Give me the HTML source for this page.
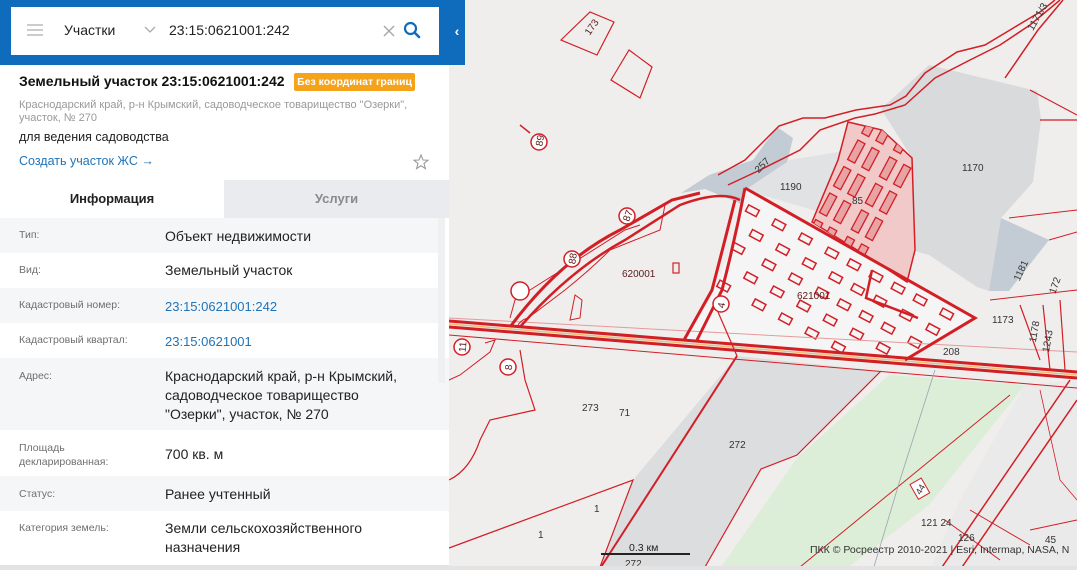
<!DOCTYPE html>
<html><head><meta charset="utf-8"><style>
*{margin:0;padding:0;box-sizing:border-box}
body{width:1077px;height:570px;overflow:hidden;font-family:"Liberation Sans","DejaVu Sans",sans-serif;background:#efeeed;position:relative}
#map{position:absolute;left:0;top:0}
#panel{position:absolute;left:0;top:0;width:449px;height:570px;background:#fff}
#hdr{position:absolute;left:0;top:0;width:449px;height:65px;background:#0f6cbd}
#box{position:absolute;left:11px;top:7px;width:428px;height:48px;background:#fff}
#tab{position:absolute;left:449px;top:0;width:16px;height:65px;background:#0f6cbd;color:#fff;font-size:14px;font-weight:bold;text-align:center;line-height:62px}
.row{position:absolute;left:0;width:438px}
.g{background:#f5f6f8}
.lab{position:absolute;left:19px;font-size:10.5px;color:#6f6f6f;line-height:14px}
.val{position:absolute;left:165px;font-size:14px;color:#222;line-height:19px}
.lnk{color:#1f73b7}
</style></head><body>
<svg id="map" width="1077" height="570" viewBox="0 0 1077 570">
<defs>
<clipPath id="set"><polygon points="745,188 975,318 905,360 684,340 710,300 735,240"/></clipPath>
<clipPath id="pk"><polygon points="848,122 882,130 912,158 915,250 907,282 870,258 812,222 838,160"/></clipPath>
</defs>
<rect width="1077" height="570" fill="#efeeed"/>
<polygon points="881,109 929,65 1037,91 1041,120 1033,182 1001,218 989,291 977,287 929,255 912,250 912,158" fill="#d9dadb"/>
<polygon points="1001,218 1049,240 1009,291 989,291" fill="#c3ccd4"/>
<polygon points="681,193 709,175 753,160 777,127 793,138 785,171 753,185 741,204 705,189" fill="#c3ccd4"/>
<polygon points="745,190 790,160 850,150 870,180 830,215" fill="#e1e2e3"/>
<polygon points="737,356 881,371 797,455 761,469 705,567 601,567 633,480" fill="#dcdddf"/>
<polygon points="889,375 1025,385 929,505 849,567 721,567 797,458" fill="#dceed7"/>
<polygon points="1025,385 1077,380 1077,570 930,570 960,500" fill="#eaeaea"/>
<polygon points="745,188 975,318 905,360 684,340 710,300 735,240" fill="#f6f5f5"/>
<g clip-path="url(#set)" fill="none" stroke="#d21f26" stroke-width="1.5">
<g transform="rotate(28 850 270)">
<rect x="690" y="160" width="12" height="7"/><rect x="715" y="160" width="12" height="7"/><rect x="740" y="160" width="12" height="7"/><rect x="770" y="160" width="12" height="7"/><rect x="800" y="160" width="12" height="7"/><rect x="830" y="160" width="12" height="7"/><rect x="860" y="160" width="12" height="7"/><rect x="890" y="160" width="12" height="7"/>
<rect x="700" y="180" width="12" height="7"/><rect x="720" y="180" width="12" height="7"/><rect x="760" y="180" width="12" height="7"/><rect x="780" y="180" width="12" height="7"/><rect x="820" y="180" width="12" height="7"/><rect x="850" y="180" width="12" height="7"/><rect x="880" y="180" width="12" height="7"/><rect x="920" y="180" width="12" height="7"/><rect x="950" y="180" width="12" height="7"/>
<rect x="710" y="200" width="12" height="7"/><rect x="740" y="200" width="12" height="7"/><rect x="770" y="200" width="12" height="7"/><rect x="800" y="200" width="12" height="7"/><rect x="840" y="200" width="12" height="7"/><rect x="870" y="200" width="12" height="7"/><rect x="900" y="200" width="12" height="7"/><rect x="930" y="200" width="12" height="7"/>
<rect x="700" y="220" width="12" height="7"/><rect x="730" y="220" width="12" height="7"/><rect x="765" y="220" width="12" height="7"/><rect x="790" y="220" width="12" height="7"/><rect x="815" y="220" width="12" height="7"/><rect x="845" y="220" width="12" height="7"/><rect x="875" y="220" width="12" height="7"/><rect x="905" y="220" width="12" height="7"/><rect x="935" y="220" width="12" height="7"/><rect x="960" y="220" width="12" height="7"/>
<rect x="720" y="240" width="12" height="7"/><rect x="750" y="240" width="12" height="7"/><rect x="780" y="240" width="12" height="7"/><rect x="810" y="240" width="12" height="7"/><rect x="835" y="240" width="12" height="7"/><rect x="860" y="240" width="12" height="7"/><rect x="885" y="240" width="12" height="7"/><rect x="910" y="240" width="12" height="7"/><rect x="940" y="240" width="12" height="7"/>
<rect x="700" y="260" width="12" height="7"/><rect x="730" y="260" width="12" height="7"/><rect x="760" y="260" width="12" height="7"/><rect x="790" y="260" width="12" height="7"/><rect x="820" y="260" width="12" height="7"/><rect x="845" y="260" width="12" height="7"/><rect x="870" y="260" width="12" height="7"/><rect x="895" y="260" width="12" height="7"/><rect x="920" y="260" width="12" height="7"/><rect x="950" y="260" width="12" height="7"/>
<rect x="715" y="280" width="12" height="7"/><rect x="745" y="280" width="12" height="7"/><rect x="775" y="280" width="12" height="7"/><rect x="805" y="280" width="12" height="7"/><rect x="835" y="280" width="12" height="7"/><rect x="860" y="280" width="12" height="7"/><rect x="885" y="280" width="12" height="7"/><rect x="915" y="280" width="12" height="7"/><rect x="945" y="280" width="12" height="7"/>
<rect x="700" y="300" width="12" height="7"/><rect x="735" y="300" width="12" height="7"/><rect x="770" y="300" width="12" height="7"/><rect x="800" y="300" width="12" height="7"/><rect x="830" y="300" width="12" height="7"/><rect x="855" y="300" width="12" height="7"/><rect x="880" y="300" width="12" height="7"/><rect x="905" y="300" width="12" height="7"/><rect x="935" y="300" width="12" height="7"/>
<rect x="720" y="320" width="12" height="7"/><rect x="760" y="320" width="12" height="7"/><rect x="790" y="320" width="12" height="7"/><rect x="820" y="320" width="12" height="7"/><rect x="850" y="320" width="12" height="7"/><rect x="880" y="320" width="12" height="7"/><rect x="910" y="320" width="12" height="7"/>
<rect x="740" y="340" width="12" height="7"/><rect x="780" y="340" width="12" height="7"/><rect x="810" y="340" width="12" height="7"/><rect x="840" y="340" width="12" height="7"/><rect x="870" y="340" width="12" height="7"/>
</g></g>
<polygon points="848,122 882,130 912,158 915,250 907,282 870,258 812,222 838,160" fill="#f1c9c9" stroke="#d21f26" stroke-width="1.5"/>
<g clip-path="url(#pk)" stroke="#d21f26" stroke-width="1.3" fill="#e8a3a5">
<g transform="rotate(-62 860 200)">
<rect x="770" y="170" width="22" height="8"/><rect x="800" y="170" width="22" height="8"/><rect x="830" y="170" width="22" height="8"/><rect x="860" y="170" width="22" height="8"/><rect x="890" y="170" width="22" height="8"/><rect x="920" y="170" width="22" height="8"/>
<rect x="770" y="186" width="22" height="8"/><rect x="800" y="186" width="22" height="8"/><rect x="830" y="186" width="22" height="8"/><rect x="860" y="186" width="22" height="8"/><rect x="890" y="186" width="22" height="8"/><rect x="920" y="186" width="22" height="8"/>
<rect x="770" y="206" width="22" height="8"/><rect x="800" y="206" width="22" height="8"/><rect x="830" y="206" width="22" height="8"/><rect x="860" y="206" width="22" height="8"/><rect x="890" y="206" width="22" height="8"/><rect x="920" y="206" width="22" height="8"/>
<rect x="770" y="222" width="22" height="8"/><rect x="800" y="222" width="22" height="8"/><rect x="830" y="222" width="22" height="8"/><rect x="860" y="222" width="22" height="8"/><rect x="890" y="222" width="22" height="8"/>
</g></g>
<g fill="none" stroke="#d21f26">
<path d="M449,318 L1077,352" stroke-width="1" stroke="#e59a9c"/>
<path d="M449,321 L1077,372" stroke-width="3"/>
<path d="M449,327 L1077,378" stroke-width="3"/>
<path d="M449,324 L1077,375" stroke-width="1.5" stroke="#e8c07a"/>
<path d="M449,335 L1077,388" stroke-width="1"/>
<path d="M745,188 L975,318 L905,360" stroke-width="3"/>
<path d="M735,200 Q725,240 712,290 L684,340" stroke-width="3"/>
<path d="M745,188 Q735,240 722,290 L697,340" stroke-width="3"/>
<path d="M872,270 L866,298 L918,318" stroke-width="2.5"/>
<path d="M510,327 Q560,260 620,230 L672,200 L700,193" stroke-width="3"/>
<path d="M520,327 Q570,270 625,240 L680,205 Q720,190 740,200" stroke-width="2.5"/>
<path d="M510,318 L515,300 L530,290 L625,230 L640,225" stroke-width="1"/>
<path d="M517,327 Q520,320 528,318 L565,290 Q590,270 610,250 L660,230 L665,205" stroke-width="1"/>
<path d="M718,175 L745,160 L779,126 L803,118 L825,118 L856,110 L890,105 L906,96 L925,73 L957,52 L985,45 L1010,30 L1040,12 L1055,0" stroke-width="1.5"/>
<path d="M728,185 L760,170 L800,150 L820,130 L855,118 L875,114 L905,105 L935,78 L970,60 L1000,45 L1030,25 L1060,0" stroke-width="1.5"/>
<path d="M1005,78 L1038,30 L1063,0" stroke-width="1.5"/>
<path d="M1030,90 L1077,115" stroke-width="1.2"/>
<path d="M1040,120 L1077,120" stroke-width="1.2"/>
<path d="M1009,218 L1077,210" stroke-width="1"/>
<path d="M1049,240 L1077,232" stroke-width="1"/>
<path d="M990,300 L1077,290" stroke-width="1"/>
<path d="M1020,305 L1040,360 M1043,305 L1050,370 M1060,300 L1065,370" stroke-width="1.2"/>
<path d="M737,356 L601,567" stroke-width="2"/>
<path d="M737,356 L718,312" stroke-width="1.2"/>
<path d="M881,371 L797,455 L761,469 L705,567" stroke-width="1.2"/>
<path d="M449,548 L633,480 L600,567" stroke-width="1.2"/>
<path d="M449,480 Q470,470 480,440 L490,420 L535,410 L525,380 L520,350" stroke-width="1.2"/>
<path d="M485,343 L495,340 L490,352 L460,375 L449,380" stroke-width="1"/>
<path d="M1010,395 L800,567" stroke-width="1"/>
<path d="M1070,380 L940,570" stroke-width="1.5"/>
<path d="M1077,400 L960,570" stroke-width="1.5"/>
<path d="M1040,390 L1060,480 L1077,500" stroke-width="0.8"/>
<path d="M945,520 L1000,560 M970,510 L1030,545 M1030,530 L1077,520" stroke-width="1"/>
<path d="M870,580 L900,480 L935,370" stroke-width="0.8" stroke="#9aa3b0"/>
<polygon points="561,40 590,12 614,22 597,55" stroke-width="1.2"/>
<polygon points="611,80 629,50 652,67 640,98" stroke-width="1.2"/>
<line x1="520" y1="125" x2="530" y2="133" stroke-width="1.5"/>
<polygon points="570,320 580,318 582,300 575,295" stroke-width="1"/>
<rect x="673" y="263" width="6" height="10" stroke-width="1.2"/>
</g>
<g fill="#fff" stroke="#d21f26" stroke-width="1.5">
<circle cx="539" cy="142" r="8"/><circle cx="627" cy="216" r="8"/><circle cx="572" cy="259" r="8"/><circle cx="520" cy="291" r="9"/><circle cx="721" cy="304" r="8"/><circle cx="462" cy="347" r="8"/><circle cx="508" cy="367" r="8"/>
</g>
<g font-family="Liberation Sans,sans-serif" font-size="10" fill="#5a1a1a">
<text x="535" y="146" transform="rotate(-80 539 142)">89</text>
<text x="622" y="220" transform="rotate(-70 627 216)">87</text>
<text x="567" y="263" transform="rotate(-80 572 259)">88</text>
<text x="717" y="308" transform="rotate(-80 721 304)">4</text>
<text x="457" y="351" transform="rotate(-85 462 347)">11</text>
<text x="505" y="371" transform="rotate(-85 508 367)">8</text>
<text x="585" y="33" transform="rotate(-55 590 30)">173</text>
<text x="753" y="170" transform="rotate(-45 760 165)" fill="#333">257</text>
<text x="780" y="190" fill="#333">1190</text>
<text x="962" y="171" fill="#333">1170</text>
<text x="852" y="204" fill="#333">85</text>
<text x="622" y="277">620001</text>
<text x="797" y="299">621001</text>
<text x="1012" y="280" transform="rotate(-65 1017 275)" fill="#333">1181</text>
<text x="1043" y="293" transform="rotate(-70 1050 285)" fill="#333">172</text>
<text x="992" y="323" fill="#333">1173</text>
<text x="943" y="355" fill="#333">208</text>
<text x="1025" y="340" transform="rotate(-80 1032 335)" fill="#333">1178</text>
<text x="1040" y="350" transform="rotate(-80 1046 346)" fill="#333">1243</text>
<text x="1035" y="45" transform="rotate(-60 1022 40)" fill="#333">1171/3</text>
<text x="582" y="411" fill="#333">273</text>
<text x="619" y="416" fill="#333">71</text>
<text x="729" y="448" fill="#333">272</text>
<text x="594" y="512" fill="#333">1</text>
<text x="538" y="538" fill="#333">1</text>
<text x="921" y="526" fill="#333">121 24</text>
<text x="958" y="541" fill="#333">126</text>
<text x="1045" y="543" fill="#333">45</text>
<text x="625" y="567" fill="#333">272</text>
</g>
<rect x="913" y="480" width="13" height="17" fill="#fff" stroke="#d21f26" transform="rotate(-30 920 488)"/>
<text x="914" y="492" font-size="9" fill="#333" font-family="Liberation Sans,sans-serif" transform="rotate(-60 920 488)">44</text>
<text x="629" y="551" font-size="10.5" fill="#222" font-family="Liberation Sans,sans-serif">0.3 км</text>
<line x1="601" y1="554" x2="690" y2="554" stroke="#222" stroke-width="2"/>
<text x="810" y="553" font-size="10.5" fill="#333" font-family="Liberation Sans,sans-serif">ПКК © Росреестр 2010-2021 | Esri, Intermap, NASA, N</text>
<rect x="0" y="566" width="1077" height="4" fill="#e3e3e3"/>
</svg>

<div id="panel">
<div id="hdr"><div id="box">
 <div style="position:absolute;left:16px;top:17px;width:16px;height:2px;background:#ccc;box-shadow:0 5px 0 #ccc,0 10px 0 #ccc"></div>
 <div style="position:absolute;left:53px;top:15px;font-size:14px;color:#222">Участки</div>
 <svg style="position:absolute;left:133px;top:19px" width="12" height="8"><path d="M1,1 L6,6 L11,1" fill="none" stroke="#aaa" stroke-width="1.3"/></svg>
 <div style="position:absolute;left:158px;top:15px;font-size:14px;color:#222">23:15:0621001:242</div>
 <svg style="position:absolute;left:372px;top:18px" width="12" height="12"><path d="M1,1 L11,11 M11,1 L1,11" stroke="#aaa" stroke-width="1.5"/></svg>
 <svg style="position:absolute;left:392px;top:14px" width="18" height="18"><circle cx="7.5" cy="7.5" r="5.5" fill="none" stroke="#0f6cbd" stroke-width="2.2"/><path d="M11.5,11.5 L16,16" stroke="#0f6cbd" stroke-width="2.6" stroke-linecap="round"/></svg>
</div></div>
<div style="position:absolute;left:19px;top:73px;font-size:14px;font-weight:bold;color:#111">Земельный участок 23:15:0621001:242</div>
<div style="position:absolute;left:294px;top:73px;width:121px;height:18px;background:#f5a31a;border-radius:2px;color:#fff;font-size:10.5px;font-weight:bold;line-height:18px;text-align:center">Без координат границ</div>
<div style="position:absolute;left:19px;top:99px;font-size:11px;color:#999;line-height:12.5px;width:400px">Краснодарский край, р-н Крымский, садоводческое товарищество "Озерки", участок, № 270</div>
<div style="position:absolute;left:19px;top:130px;font-size:12.5px;color:#222">для ведения садоводства</div>
<div style="position:absolute;left:19px;top:154px;font-size:12.5px;color:#1f73b7">Создать участок ЖС →</div>
<svg style="position:absolute;left:413px;top:154px" width="16" height="16"><path d="M8,1 L10,6 L15,6.2 L11,9.5 L12.4,14.6 L8,11.7 L3.6,14.6 L5,9.5 L1,6.2 L6,6 Z" fill="none" stroke="#999" stroke-width="1.1"/></svg>
<div style="position:absolute;left:0;top:180px;width:224px;height:38px;background:#fff;font-size:13px;font-weight:bold;color:#222;text-align:center;line-height:38px">Информация</div>
<div style="position:absolute;left:224px;top:180px;width:225px;height:38px;background:#e9ebee;font-size:13px;font-weight:bold;color:#8a8a8a;text-align:center;line-height:38px">Услуги</div>
<div class="row g" style="top:218px;height:35px"><div class="lab" style="top:10px">Тип:</div><div class="val" style="top:9px">Объект недвижимости</div></div>
<div class="row" style="top:253px;height:35px"><div class="lab" style="top:10px">Вид:</div><div class="val" style="top:8px">Земельный участок</div></div>
<div class="row g" style="top:288px;height:35px"><div class="lab" style="top:10px">Кадастровый номер:</div><div class="val lnk" style="top:9px;font-size:13px">23:15:0621001:242</div></div>
<div class="row" style="top:323px;height:35px"><div class="lab" style="top:10px">Кадастровый квартал:</div><div class="val lnk" style="top:9px;font-size:13px">23:15:0621001</div></div>
<div class="row g" style="top:358px;height:72px;width:449px"><div class="lab" style="top:11px">Адрес:</div><div class="val" style="top:9px">Краснодарский край, р-н Крымский,<br>садоводческое товарищество<br>"Озерки", участок, № 270</div></div>
<div class="row" style="top:430px;height:46px;width:449px"><div class="lab" style="top:11px">Площадь<br>декларированная:</div><div class="val" style="top:15px">700 кв. м</div></div>
<div class="row g" style="top:476px;height:35px;width:449px"><div class="lab" style="top:11px">Статус:</div><div class="val" style="top:9px">Ранее учтенный</div></div>
<div class="row" style="top:511px;height:54px;width:449px"><div class="lab" style="top:10px">Категория земель:</div><div class="val" style="top:8px">Земли сельскохозяйственного<br>назначения</div></div>
<div style="position:absolute;left:438px;top:218px;width:7px;height:165px;background:#eef0f2"></div>
<div style="position:absolute;left:0;top:565px;width:449px;height:5px;background:#e3e3e3"></div>
</div>
<div id="tab">‹</div>
</body></html>
